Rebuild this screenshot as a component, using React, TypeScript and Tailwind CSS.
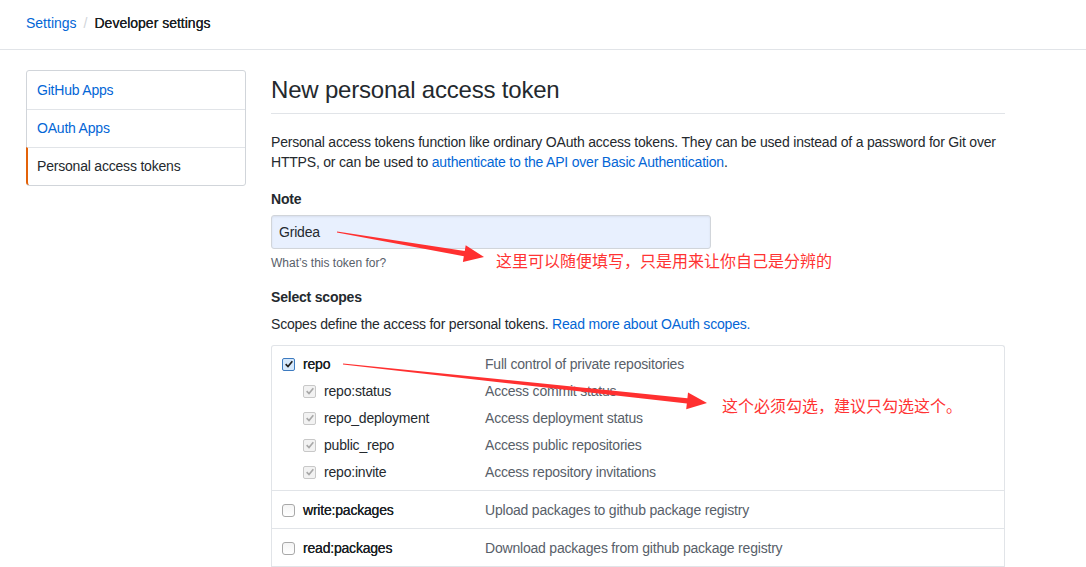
import React from "react";

// GitHub "New personal access token" page, with red annotation arrows on top

const FONT = "font-['Liberation_Sans','Noto_Sans_CJK_SC',sans-serif] tracking-[-0.2px]";

type Scope = {
  name: string;
  desc: string;
  state: "checked" | "disabled" | "off";
  subs?: { name: string; desc: string }[];
};

const SCOPES: Scope[] = [
  {
    name: "repo",
    desc: "Full control of private repositories",
    state: "checked",
    subs: [
      { name: "repo:status", desc: "Access commit status" },
      { name: "repo_deployment", desc: "Access deployment status" },
      { name: "public_repo", desc: "Access public repositories" },
      { name: "repo:invite", desc: "Access repository invitations" },
    ],
  },
  { name: "write:packages", desc: "Upload packages to github package registry", state: "off" },
  { name: "read:packages", desc: "Download packages from github package registry", state: "off" },
];

function CheckBox({ state }: { state: "checked" | "disabled" | "off" }) {
  if (state === "checked") {
    return (
      <span className="w-[13px] h-[13px] shrink-0 rounded-[2px] border border-[#3d7bc0] bg-[#d6e8fb] flex items-center justify-center">
        <svg viewBox="0 0 12 12" className="w-[10px] h-[10px]">
          <path d="M2 6.2 L4.8 9 L10 2.8" fill="none" stroke="#1f1f1f" strokeWidth={2} />
        </svg>
      </span>
    );
  }
  if (state === "disabled") {
    return (
      <span className="w-[13px] h-[13px] shrink-0 rounded-[2px] border border-[#c8c8c8] bg-[#f2f2f2] flex items-center justify-center">
        <svg viewBox="0 0 12 12" className="w-[10px] h-[10px]">
          <path d="M2 6.2 L4.8 9 L10 2.8" fill="none" stroke="#a8a8a8" strokeWidth={2} />
        </svg>
      </span>
    );
  }
  return (
    <span className="w-[13px] h-[13px] shrink-0 rounded-[3px] border border-[#a8a8a8] bg-gradient-to-b from-[#f4f4f4] to-[#ffffff]" />
  );
}

function ScopeRow({ scope, first }: { scope: Scope; first: boolean }) {
  return (
    <div className={`px-[10px] pb-[8px] border-b border-[#e1e4e8] ${first ? "pt-[8px]" : "pt-[9px]"}`}>
      <div className="flex items-center h-5">
        <div className="w-[203px] flex items-center gap-2">
          <CheckBox state={scope.state} />
          <span className="text-[#1b1f23] [text-shadow:0_0_0.4px_#1b1f23]">{scope.name}</span>
        </div>
        <span className="text-[#586069]">{scope.desc}</span>
      </div>
      {scope.subs?.map((s) => (
        <div key={s.name} className="flex items-center h-5 mt-[7px] pl-[21px]">
          <div className="w-[182px] flex items-center gap-2">
            <CheckBox state="disabled" />
            <span className="text-[#24292e]">{s.name}</span>
          </div>
          <span className="text-[#586069]">{s.desc}</span>
        </div>
      ))}
    </div>
  );
}

// tapered arrow: thin tail, thick end, triangular head
function arrowPoints(x1: number, y1: number, x2: number, y2: number) {
  const len = Math.hypot(x2 - x1, y2 - y1);
  const dx = (x2 - x1) / len;
  const dy = (y2 - y1) / len;
  const nx = -dy;
  const ny = dx;
  const headLen = 20;
  const bx = x2 - dx * headLen;
  const by = y2 - dy * headLen;
  const pts = [
    [x1 + nx * 0.6, y1 + ny * 0.6],
    [bx + nx * 2.6, by + ny * 2.6],
    [bx + nx * 8.5, by + ny * 8.5],
    [x2, y2],
    [bx - nx * 8.5, by - ny * 8.5],
    [bx - nx * 2.6, by - ny * 2.6],
    [x1 - nx * 0.6, y1 - ny * 0.6],
  ];
  return pts.map((p) => p.join(",")).join(" ");
}

export default function App() {
  return (
    <div className={`relative min-h-screen bg-white text-[14px] text-[#24292e] ${FONT}`}>
      {/* ── Breadcrumb ── */}
      <div className="h-[50px] border-b border-[#e1e4e8] px-[26px] pb-[2px] flex items-center tracking-normal">
        <span className="text-[#0366d6]">Settings</span>
        <span className="mx-[7px] text-[#d1d5da]">/</span>
        <span className="text-[#1b1f23] [text-shadow:0_0_0.5px_#1b1f23]">Developer settings</span>
      </div>

      <div className="flex gap-[25px] pl-[26px] pt-[20px]">
        {/* ── Sidebar ── */}
        <nav className="w-[220px] shrink-0 self-start border border-[#d1d5da] rounded-[3px]">
          <div className="h-[38px] flex items-center pl-[10px] text-[#0366d6]">GitHub Apps</div>
          <div className="h-[38px] flex items-center pl-[10px] text-[#0366d6] border-t border-[#e1e4e8]">
            OAuth Apps
          </div>
          <div className="h-[38px] flex items-center pl-[8px] border-t border-[#e1e4e8] border-l-2 border-l-[#e36209] -ml-px rounded-bl-[3px] text-[#24292e]">
            <span className="pl-px">Personal access tokens</span>
          </div>
        </nav>

        {/* ── Main ── */}
        <main className="w-[734px] shrink-0">
          <h1 className="mt-[5px] pb-2 border-b border-[#e1e4e8] text-[24px] leading-[30px] font-normal">
            New personal access token
          </h1>

          <p className="mt-[18px] leading-5">
            Personal access tokens function like ordinary OAuth access tokens. They can be used instead of a password
            for Git over HTTPS, or can be used to{" "}
            <span className="text-[#0366d6]">authenticate to the API over Basic Authentication</span>.
          </p>

          <div className="mt-[17px] font-semibold leading-5">Note</div>
          <div className="mt-[6px] w-[440px] h-[34px] rounded-[3px] border border-[#d1d5da] bg-[#e8f0fe] px-[7px] flex items-center shadow-[inset_0_1px_2px_rgba(27,31,35,0.075)]">
            Gridea
          </div>
          <div className="mt-[6px] text-[12px] leading-4 text-[#586069] tracking-normal">What’s this token for?</div>

          <div className="mt-[16px] font-semibold leading-5">Select scopes</div>
          <p className="mt-[7px] leading-5">
            Scopes define the access for personal tokens.{" "}
            <span className="text-[#0366d6]">Read more about OAuth scopes.</span>
          </p>

          <div className="mt-[11px] border border-b-0 border-[#e1e4e8] rounded-t-[3px]">
            {SCOPES.map((s, i) => (
              <ScopeRow key={s.name} scope={s} first={i === 0} />
            ))}
          </div>
        </main>
      </div>

      {/* ── Annotations ── */}
      <svg className="absolute left-0 top-0 pointer-events-none" width="1086" height="567">
        <polygon points={arrowPoints(337, 232, 484, 257)} fill="#ff3030" />
        <polygon points={arrowPoints(343, 364, 707, 403)} fill="#ff3030" />
      </svg>
      <div className="absolute left-[496px] top-[249px] text-[16px] leading-[22px] tracking-normal text-[#ff3333] font-['Noto_Sans_CJK_SC',sans-serif]">
        这里可以随便填写，只是用来让你自己是分辨的
      </div>
      <div className="absolute left-[722px] top-[394px] text-[16px] leading-[22px] tracking-normal text-[#ff3333] font-['Noto_Sans_CJK_SC',sans-serif]">
        这个必须勾选，建议只勾选这个。
      </div>
    </div>
  );
}
